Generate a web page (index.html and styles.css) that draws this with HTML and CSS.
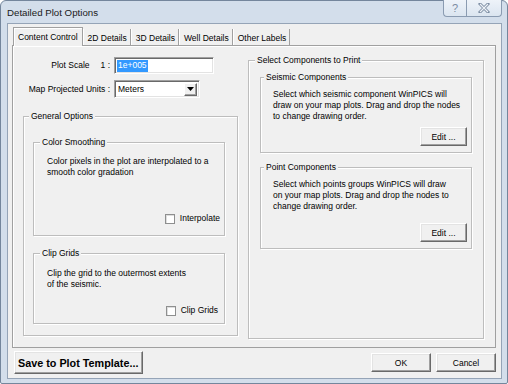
FILE: index.html
```html
<!DOCTYPE html>
<html lang="en">
<head>
  <meta charset="UTF-8">
  <title>Detailed Plot Options</title>
  <link rel="stylesheet" href="styles.css">
</head>
<body>
  <div class="window">
    <!-- Title bar -->
    <div class="titlebar">
      <span class="title">Detailed Plot Options</span>
      <div class="caption-buttons">
        <span class="cap-btn help">?</span>
        <span class="cap-btn close">
          <svg width="12" height="10" viewBox="0 0 12 10">
            <path d="M2 1 L10 9 M10 1 L2 9" stroke="#7b8ca2" stroke-width="3" stroke-linecap="square"/>
            <path d="M2 1 L10 9 M10 1 L2 9" stroke="#eef2f7" stroke-width="1.2"/>
          </svg>
        </span>
      </div>
    </div>

    <div class="client">
      <!-- Tabs -->
      <div class="tabs">
        <span class="tab active">Content Control</span>
        <span class="tab">2D Details</span>
        <span class="tab">3D Details</span>
        <span class="tab">Well Details</span>
        <span class="tab">Other Labels</span>
      </div>

      <div class="panel">
        <!-- Left column -->
        <div class="col-left">
          <div class="field-row">
            <label class="field-label"><span class="scale-word">Plot Scale</span>1 :</label>
            <div class="text-input"><span class="selected">1e+005</span></div>
          </div>
          <div class="field-row">
            <label class="field-label">Map Projected Units :</label>
            <div class="dropdown">
              <span class="dropdown-value">Meters</span>
              <span class="drop-btn">
                <svg width="7" height="4" viewBox="0 0 7 4"><path d="M0 0 H7 L3.5 4 Z" fill="#000"/></svg>
              </span>
            </div>
          </div>

          <fieldset class="group general">
            <legend>General Options</legend>
            <div class="general-body">
              <fieldset class="group sub">
                <legend>Color Smoothing</legend>
                <div class="group-body smoothing">
                  <p>Color pixels in the plot are interpolated to a<br>smooth color gradation</p>
                  <label class="check"><span class="box"></span>Interpolate</label>
                </div>
              </fieldset>

              <fieldset class="group sub clip">
                <legend>Clip Grids</legend>
                <div class="group-body clipping">
                  <p>Clip the grid to the outermost extents<br>of the seismic.</p>
                  <label class="check"><span class="box"></span>Clip Grids</label>
                </div>
              </fieldset>
            </div>
          </fieldset>
        </div>

        <!-- Right column -->
        <fieldset class="group components">
          <legend>Select Components to Print</legend>
          <div class="components-body">
            <fieldset class="group comp seismic">
              <legend>Seismic Components</legend>
              <div class="group-body comp-body">
                <p>Select which seismic component WinPICS will<br>draw on your map plots. Drag and drop the nodes<br>to change drawing order.</p>
                <button class="btn edit">Edit ...</button>
              </div>
            </fieldset>

            <fieldset class="group comp points">
              <legend>Point Components</legend>
              <div class="group-body comp-body">
                <p>Select which points groups WinPICS will draw<br>on your map plots. Drag and drop the nodes to<br>change drawing order.</p>
                <button class="btn edit">Edit ...</button>
              </div>
            </fieldset>
          </div>
        </fieldset>
      </div>

      <!-- Bottom buttons -->
      <div class="button-row">
        <button class="btn save">Save to Plot Template...</button>
        <div class="dialog-buttons">
          <button class="btn ok">OK</button>
          <button class="btn">Cancel</button>
        </div>
      </div>
    </div>
  </div>
</body>
</html>
```

FILE: styles.css
```css
/* General */
* {
  box-sizing: border-box;
}

body {
  margin: 0;
  background: #fff;
  font-family: 'Liberation Sans', Arial, sans-serif;
  font-size: 8.5px;
  line-height: 11px;
  color: #000;
}

p {
  margin: 0;
  white-space: nowrap;
}

/* Window frame */
.window {
  width: 508px;
  height: 384px;
  display: flex;
  flex-direction: column;
  padding: 0 5px 4px 6px;
  background: #d3deeb;
  border: 1px solid #74869c;
  border-radius: 6px 6px 2px 2px;
}

.titlebar {
  height: 22px;
  display: flex;
  justify-content: space-between;
  align-items: flex-start;
}

.title {
  padding-top: 6px;
  font-size: 9.7px;
  color: #1a1a1a;
}

.caption-buttons {
  display: flex;
  margin-top: -1px;
}

.cap-btn {
  height: 17px;
  display: flex;
  align-items: center;
  justify-content: center;
  background: linear-gradient(#eef3f9, #dbe5f0);
  border: 1px solid #8a9bb1;
  border-top: none;
}

.cap-btn.help {
  width: 23px;
  border-radius: 0 0 0 4px;
  border-right: none;
  font-size: 11px;
  color: #7b8ca2;
}

.cap-btn.close {
  width: 36px;
  border-radius: 0 0 4px 0;
}

/* Client area */
.client {
  flex: 1;
  display: flex;
  flex-direction: column;
  padding: 3px 5px 0 4px;
  background: #f0f0f0;
  border: 1px solid #95a4b7;
}

/* Tabs */
.tabs {
  height: 18px;
  display: flex;
  align-items: flex-end;
  margin-left: 1px;
}

.tab {
  height: 16px;
  padding: 4px 3px 0 4px;
  border-left: 1px solid #fff;
  border-right: 1px solid #a0a0a0;
  white-space: nowrap;
}

.tab.active {
  position: relative;
  z-index: 1;
  height: 19px;
  margin-bottom: -1px;
  padding: 4px 4px 0 4px;
  background: #f0f0f0;
  border: 1px solid #a0a0a0;
  border-bottom: none;
  box-shadow: inset 1px 1px 0 #fff;
}

.panel {
  height: 303px;
  display: grid;
  grid-template-columns: 215px 236px;
  column-gap: 10px;
  align-items: start;
  padding: 9px 12px 0 10px;
  border: 1px solid #a0a0a0;
  box-shadow: inset 1px 1px 0 #fff;
}

/* Left column form rows */
.col-left {
  padding-top: 2px;
}

.field-row {
  display: flex;
  align-items: center;
  gap: 4px;
}

.field-row + .field-row {
  margin-top: 6px;
}

.field-label {
  width: 87px;
  text-align: right;
  white-space: nowrap;
}

.scale-word {
  margin-right: 11px;
}

.text-input {
  width: 100px;
  height: 17px;
  padding: 2px 0 0 2px;
  background: #fff;
  border: 1px solid;
  border-color: #a0a0a0 #fff #fff #a0a0a0;
  box-shadow: inset 1px 1px 0 #696969, inset -1px -1px 0 #e3e3e3;
}

.selected {
  display: inline-block;
  height: 12px;
  padding: 0 1px;
  background: #3399ff;
  color: #fff;
}

.dropdown {
  width: 86px;
  height: 18px;
  display: flex;
  align-items: center;
  justify-content: space-between;
  padding: 2px;
  background: #fff;
  border: 1px solid;
  border-color: #a0a0a0 #fff #fff #a0a0a0;
  box-shadow: inset 1px 1px 0 #696969, inset -1px -1px 0 #e3e3e3;
}

.dropdown-value {
  padding-left: 1px;
}

.drop-btn {
  width: 13px;
  height: 13px;
  display: flex;
  align-items: center;
  justify-content: center;
  background: #f0f0f0;
  border: 1px solid;
  border-color: #fff #696969 #696969 #fff;
  box-shadow: inset -1px -1px 0 #a0a0a0;
}

/* Group boxes */
.group {
  margin: 0;
  padding: 0;
  min-width: 0;
  border: 1px solid #bdbdbd;
  box-shadow: 1px 1px 0 #fff, inset 1px 1px 0 #fff;
}

.group legend {
  margin-left: 5px;
  padding: 0 2px;
  background: #f0f0f0;
  white-space: nowrap;
}

.group.general {
  margin-top: 13px;
}

.general-body {
  padding: 15px 12px 11px 9px;
}

.group.sub legend {
  margin-left: 6px;
}

.group.clip {
  margin-top: 12px;
}

.group-body {
  display: flex;
  flex-direction: column;
  justify-content: space-between;
}

.smoothing {
  height: 87px;
  padding: 8px 4px 11px 13px;
}

.clipping {
  height: 64px;
  padding: 9px 6px 7px 13px;
}

.check {
  display: flex;
  align-items: center;
  align-self: flex-end;
  gap: 5px;
}

.box {
  width: 10px;
  height: 10px;
  background: #fff;
  border: 1px solid #8e8f8f;
  box-shadow: inset 1px 1px 0 #dedede;
}

/* Right column */
.group.components {
  height: 284px;
}

.group.components legend {
  margin-left: 6px;
}

.components-body {
  padding: 6px 11px 0 11px;
}

.group.comp legend {
  margin-left: 3px;
}

.group.points {
  margin-top: 9px;
}

.comp-body {
  padding: 6px 4px 6px 12px;
}

.seismic .comp-body {
  height: 69px;
}

.points .comp-body {
  height: 75px;
}

/* Buttons */
.btn {
  height: 19px;
  width: 60px;
  padding: 0;
  background: #f0f0f0;
  font-family: inherit;
  font-size: 8.5px;
  color: #000;
  border: 1px solid;
  border-color: #fff #696969 #696969 #fff;
  box-shadow: inset -1px -1px 0 #a0a0a0, inset 1px 1px 0 #e3e3e3;
}

.btn.edit {
  width: 47px;
  align-self: flex-end;
}

.button-row {
  display: flex;
  align-items: center;
  justify-content: space-between;
  margin-top: 3px;
}

.btn.save {
  width: 129px;
  height: 23px;
  margin-left: 2px;
  font-size: 10.8px;
  font-weight: bold;
  text-align: left;
  padding-left: 3px;
}

.dialog-buttons {
  display: flex;
  gap: 5px;
}
```
